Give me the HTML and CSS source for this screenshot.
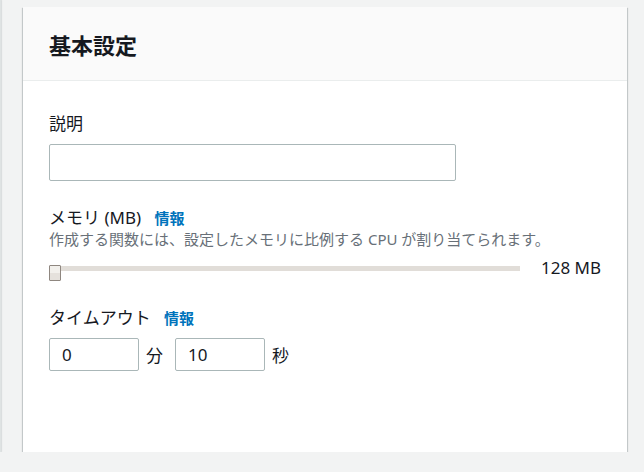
FILE: index.html
```html
<!DOCTYPE html>
<html lang="ja">
<head>
  <meta charset="UTF-8">
  <meta name="viewport" content="width=device-width, initial-scale=1.0">
  <title>基本設定</title>
  <link rel="stylesheet" href="styles.css">
</head>
<body>
  <div class="page">
    <!-- previous panel, cut off on the left -->
    <div class="edge"></div>

    <div class="card">
      <div class="card-head">
        <h2>基本設定</h2>
      </div>

      <div class="card-body">
        <label class="lbl" for="desc">説明</label>
        <input class="field wide" type="text" id="desc">

        <div class="lbl spaced">メモリ (MB) <a class="info" href="#">情報</a></div>
        <p class="hint">作成する関数には、設定したメモリに比例する CPU が割り当てられます。</p>
        <div class="mem">
          <div class="track">
            <div class="thumb"></div>
          </div>
          <span class="mem-val">128 MB</span>
        </div>

        <div class="lbl spaced2">タイムアウト <a class="info" href="#">情報</a></div>
        <div class="timeout">
          <input class="field small" type="text" value="0">
          <span class="unit">分</span>
          <input class="field small" type="text" value="10">
          <span class="unit">秒</span>
        </div>
      </div>
    </div>
  </div>
</body>
</html>
```

FILE: styles.css
```css
body {
  margin: 0;
  background: #f2f3f3;
  font-family: "Noto Sans", "Noto Sans CJK JP", sans-serif;
  color: #16191f;
}
.page {
  display: flex;
  align-items: flex-start;
}
.edge {
  width: 1px;
  height: 452px;
  background: #dfe3e3;
  box-shadow: 1px 0 1px 0 rgba(0, 28, 36, 0.12);
}
.card {
  margin-left: 22px;
  margin-top: 7px;
  width: 604px;
  height: 445px;
  background: white;
  box-shadow: 0 1px 1px 0 rgba(0, 28, 36, 0.3), 1px 1px 1px 0 rgba(0, 28, 36, 0.15), -1px 1px 1px 0 rgba(0, 28, 36, 0.15);
}
.card-head {
  height: 73px;
  background: #fafafa;
  border-bottom: 1px solid #eaeded;
  padding: 0 26px;
  display: flex;
  align-items: center;
}
.card-head h2 {
  margin: 0;
  font-size: 22px;
  font-weight: bold;
}
.card-body {
  padding: 32px 26px 0;
}
.lbl {
  display: block;
  font-size: 17px;
  line-height: 22px;
}
.spaced {
  margin-top: 26px;
}
.spaced2 {
  margin-top: 29px;
}
.info {
  margin-left: 9px;
  color: #0073bb;
  font-weight: bold;
  font-size: 15px;
  text-decoration: none;
}
.field {
  box-sizing: border-box;
  border: 1px solid #aab7b8;
  border-radius: 2px;
  font-family: inherit;
  font-size: 17px;
  color: #16191f;
  padding: 0 12px;
  background: white;
}
.wide {
  display: block;
  margin-top: 9px;
  width: 407px;
  height: 37px;
}
.hint {
  margin: 0;
  font-size: 15px;
  line-height: 20px;
  color: #687078;
}
.mem {
  margin-top: 9px;
  height: 20px;
  display: flex;
  align-items: center;
  gap: 21px;
}
.track {
  flex: 1;
  height: 5px;
  background: #e1ddd8;
  position: relative;
}
.thumb {
  position: absolute;
  left: 0;
  top: -1px;
  box-sizing: border-box;
  width: 12px;
  height: 16px;
  border: 1px solid #8f8780;
  border-radius: 1px;
  background: linear-gradient(#f2f0ec 50%, #e5e1dc 50%);
}
.mem-val {
  font-size: 17px;
  line-height: 20px;
}
.timeout {
  margin-top: 9px;
  display: flex;
  align-items: center;
}
.small {
  width: 90px;
  height: 33px;
}
.unit {
  font-size: 17px;
  margin: 0 12px 0 7px;
}
```
